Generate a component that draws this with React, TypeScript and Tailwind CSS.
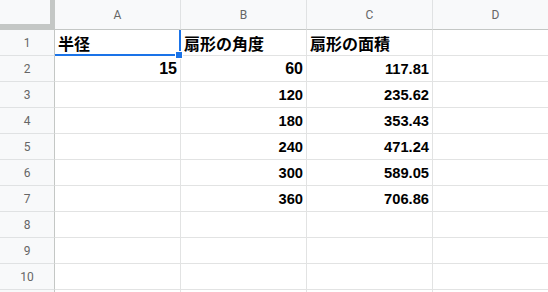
import React from 'react';

const cols = ['A', 'B', 'C', 'D'];

type Cell = { text: string; align?: 'left' | 'right'; big?: boolean; cjk?: boolean };

const rows: Cell[][] = [
  [
    { text: '半径', cjk: true, big: true },
    { text: '扇形の角度', cjk: true, big: true },
    { text: '扇形の面積', cjk: true, big: true },
  ],
  [
    { text: '15', align: 'right', big: true },
    { text: '60', align: 'right', big: true },
    { text: '117.81', align: 'right' },
  ],
  [{ text: '' }, { text: '120', align: 'right' }, { text: '235.62', align: 'right' }],
  [{ text: '' }, { text: '180', align: 'right' }, { text: '353.43', align: 'right' }],
  [{ text: '' }, { text: '240', align: 'right' }, { text: '471.24', align: 'right' }],
  [{ text: '' }, { text: '300', align: 'right' }, { text: '589.05', align: 'right' }],
  [{ text: '' }, { text: '360', align: 'right' }, { text: '706.86', align: 'right' }],
  [],
  [],
  [],
];

const headFont = { fontFamily: 'Roboto, "Liberation Sans", Arial, sans-serif' };

const CellBox: React.FC<{ cell?: Cell; selected?: boolean }> = ({ cell, selected }) => {
  const right = cell?.align === 'right';
  return (
    <div
      className={`relative w-[126px] h-[26px] shrink-0 border-r border-b border-[#e2e3e3] flex items-center px-[3px] pt-[1px] font-bold text-black ${
        right ? 'justify-end' : 'justify-start'
      } ${cell?.big ? 'text-[16px]' : 'text-[14.7px]'} ${
        cell?.cjk
          ? "font-['Noto_Sans_CJK_JP',sans-serif]"
          : "font-['Liberation_Sans',Arial,sans-serif]"
      }`}
    >
      <span className="leading-none whitespace-nowrap">{cell?.text}</span>
      {selected && (
        <>
          <div className="absolute left-0 right-[-1px] bottom-[-1px] h-[2px] bg-[#1a73e8]" />
          <div className="absolute top-0 right-[-1px] bottom-[-1px] w-[2px] bg-[#1a73e8]" />
          <div className="absolute right-[-3px] bottom-[-4px] w-[8px] h-[8px] bg-[#1a73e8] border border-white z-10" />
        </>
      )}
    </div>
  );
};

export default function App() {
  return (
    <div className="w-[548px] h-[292px] overflow-hidden bg-white select-none">
      <div className="flex h-[30px]">
        <div className="w-[55px] h-[30px] shrink-0 bg-[#c4c7c5]">
          <div className="w-[50px] h-[24px] bg-[#f8f9fa]" />
        </div>
        {cols.map((c) => (
          <div
            key={c}
            style={headFont}
            className="w-[126px] h-[30px] shrink-0 bg-[#f8f9fa] border-r border-[#e0e2e3] border-b border-b-[#c4c7c5] flex items-center justify-center text-[12px] text-[#666666]"
          >
            {c}
          </div>
        ))}
      </div>
      {rows.map((row, i) => (
        <div key={i} className="flex">
          <div
            style={headFont}
            className="w-[55px] h-[26px] shrink-0 bg-[#f8f9fa] border-r border-r-[#c4c7c5] border-b border-[#e0e2e3] flex items-center justify-center text-[12px] text-[#666666]"
          >
            {i + 1}
          </div>
          {cols.map((c, j) => (
            <CellBox key={c} cell={row[j]} selected={i === 0 && j === 0} />
          ))}
        </div>
      ))}
      <div className="flex">
        <div className="w-[55px] h-[26px] shrink-0 bg-[#f8f9fa] border-r border-r-[#c4c7c5]" />
        {cols.map((c) => (
          <div key={c} className="w-[126px] h-[26px] shrink-0 border-r border-[#e2e3e3]" />
        ))}
      </div>
    </div>
  );
}
